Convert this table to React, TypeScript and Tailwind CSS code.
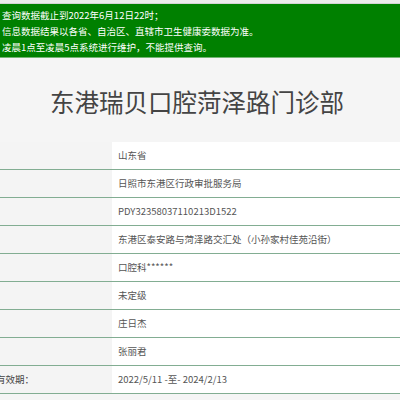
const NOTICE = [
  "查询数据截止到2022年6月12日22时；",
  "信息数据结果以各省、自治区、直辖市卫生健康委数据为准。",
  "凌晨1点至凌晨5点系统进行维护，不能提供查询。",
];

const ROWS: { label: string; value: string }[] = [
  { label: "", value: "山东省" },
  { label: "", value: "日照市东港区行政审批服务局" },
  { label: "", value: "PDY32358037110213D1522" },
  { label: "", value: "东港区泰安路与菏泽路交汇处（小孙家村佳苑沿街）" },
  { label: "", value: "口腔科******" },
  { label: "", value: "未定级" },
  { label: "", value: "庄日杰" },
  { label: "", value: "张丽君" },
  { label: "有效期：", value: "2022/5/11 -至- 2024/2/13" },
];

export default function App() {
  return (
    <div
      className="h-[400px] w-[400px] overflow-hidden bg-[#f5f5f5]"
      style={{ fontFamily: '"Noto Sans CJK SC", "Noto Sans", sans-serif' }}
    >
      <div className="h-[4px] border-b border-[#d4d4d4] bg-[#ececec]" />
      <div className="border-b border-[#74b574] bg-[#008000] pt-[3px] pb-[2px] pl-[2px] text-[9.5px] leading-[16px] text-white">
        {NOTICE.map((line) => (
          <div key={line}>{line}</div>
        ))}
      </div>

      <div className="flex h-[84px] items-center justify-center pt-[5px] pr-[6px] text-[24.5px] text-[#444]">
        东港瑞贝口腔菏泽路门诊部
      </div>

      <div className="flex flex-col">
        {ROWS.map((row, i) => (
          <div key={i} className="flex h-[28px] border-b border-[#82ad92] text-[9.5px]">
            <div className="flex w-[112px] items-center overflow-hidden bg-[#f4f4f4] text-[#444]">
              <span className="-ml-[4px] whitespace-nowrap">{row.label}</span>
            </div>
            <div className="flex flex-1 items-center bg-white pl-[6px] text-[#555]">
              {row.value}
            </div>
          </div>
        ))}
      </div>
    </div>
  );
}
